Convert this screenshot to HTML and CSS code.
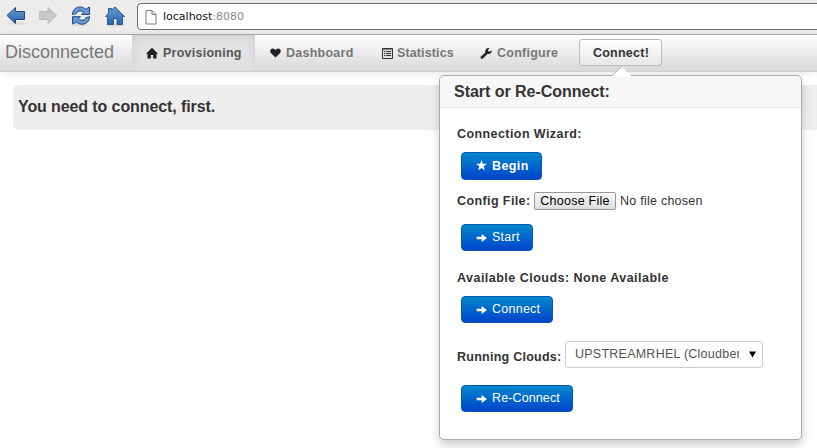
FILE: index.html
```html
<!DOCTYPE html>
<html lang="en">
<head>
<meta charset="utf-8">
<title>Provisioning</title>
<link rel="stylesheet" href="styles.css">
</head>
<body>
<svg width="0" height="0" class="defs">
  <defs>
    <linearGradient id="blue" x1="0" y1="0" x2="0" y2="1"><stop offset="0" stop-color="#6b9bd2"/><stop offset="1" stop-color="#2763ad"/></linearGradient>
    <symbol id="arrow" viewBox="0 0 11 8"><path d="M.7 2.700h5V0L11 4 5.700 8V5.300H.7z" fill="#fff"/></symbol>
  </defs>
</svg>
<header class="browser">
  <svg class="tool" width="22" height="24" viewBox="0 0 22 24"><ellipse cx="12" cy="19.500" rx="9" ry="1.500" fill="#dededc"/><path d="M2 11.500L10.500 3.500V7.500H19.500V15.500H10.500V19.500z" fill="url(#blue)" stroke="#204a87"/></svg>
  <svg class="tool" width="22" height="24" viewBox="0 0 22 24"><path d="M18.500 11.500L10 3.500V7.500H1.500V15.500H10V19.500z" fill="#c9c9c7" stroke="#bdbdbb"/></svg>
  <svg class="tool" width="22" height="24" viewBox="0 0 22 24"><ellipse cx="10" cy="21" rx="8" ry="1.500" fill="#dededc"/><g fill="#6797d0" stroke="#204a87"><path d="M1.500 10.500C1.500 3.500 9.500 .5 14.800 5.200L18.500 3V10.500H10.500L12.600 8.300C9.500 6 6 7 5.200 9.500z"/><path d="M1.500 10.500C1.500 3.500 9.500 .5 14.800 5.200L18.500 3V10.500H10.500L12.600 8.300C9.500 6 6 7 5.200 9.500z" transform="rotate(180 10 11.600)"/></g></svg>
  <svg class="tool" width="22" height="24" viewBox="0 0 22 24"><ellipse cx="10" cy="21" rx="10" ry="1.500" fill="#d5d5d3"/><path d="M.5 12.500L3.500 9V4.500H6.500V6L10 3L19.500 12.500H17.500V20.500H12V14.500H8.500V20.500H2.500V12.500z" fill="url(#blue)" stroke="#2a5a9c"/></svg>
  <div class="address">
    <svg width="12" height="16" viewBox="0 0 12 16"><path d="M1 1.500H7L11 5.500V15H1zM7 1.500V5.500H11" fill="#fff" stroke="#777"/></svg>
    <span class="url">localhost<span class="port">:8080</span></span>
  </div>
</header>
<nav class="navbar">
  <span class="brand">Disconnected</span>
  <a class="tab active"><svg width="12" height="12" viewBox="0 0 12 12"><path d="M6 .8L12 6.800H10.500V11.500H7.200V8H4.800V11.500H1.500V6.800H0z" fill="#222"/></svg><span class="t-prov">Provisioning</span></a>
  <a class="tab dash"><svg width="11" height="12" viewBox="0 0 12 12"><path d="M6 11L1.200 6.400C-.8 4 .6 1.200 3 1.200 4.500 1.200 5.500 2 6 3 6.500 2 7.500 1.200 9 1.200 11.400 1.200 12.800 4 10.800 6.400z" fill="#222"/></svg><span class="t-dash">Dashboard</span></a>
  <a class="tab stats"><svg width="11" height="12" viewBox="0 0 11 12"><path d="M.5 1.500H10.500V11.500H.5z" fill="#ddd" stroke="#333"/><path d="M0 2H11M2 4.500H3.300M2 6.500H3.300M2 8.500H3.300M4.200 4.500H9M4.200 6.500H9M4.200 8.500H9" stroke="#333"/></svg><span class="t-stat">Statistics</span></a>
  <a class="tab conf"><svg width="12" height="12" viewBox="0 0 12 12"><path d="M.8 9.800L5.400 5.500C4.700 2.800 6.700.6 9.400 1.200L8 3L8.400 4.400L9.900 4.600L11.700 3.200C12 6 9.800 7.500 7.400 6.900L2.900 11.500C1.600 12.200.2 11 .4 10z" fill="#222"/></svg><span class="t-conf">Configure</span></a>
  <button class="connect"><span>Connect!</span></button>
</nav>
<main>
  <section class="notice"><span>You need to connect, first.</span></section>
</main>
<aside class="popover">
  <svg class="tip" width="20" height="11" viewBox="0 0 20 11"><path d="M0 10L9.500 .7L19 10V11H0z" fill="#fff"/><path d="M0 9.500L9.500 .5" fill="none" stroke="#aaa"/></svg>
  <h3><span>Start or Re-Connect:</span></h3>
  <div class="content">
    <div class="label wizard"><span>Connection Wizard:</span></div>
    <button class="btn begin"><svg width="11" height="11" viewBox="0 0 11 11"><path d="M5.500 0L6.900 3.800H11L7.700 6.300L8.900 10.500L5.500 8L2.100 10.500L3.300 6.300L0 3.800H4.100z" fill="#fff"/></svg><span>Begin</span></button>
    <div class="row file"><b>Config File:</b><button class="choose"><span>Choose File</span></button><span class="none">No file chosen</span></div>
    <button class="btn start"><svg width="11" height="8"><use href="#arrow"/></svg><span>Start</span></button>
    <div class="label available"><span>Available Clouds: None Available</span></div>
    <button class="btn conn"><svg width="11" height="8"><use href="#arrow"/></svg><span>Connect</span></button>
    <div class="row running"><b>Running Clouds:</b><div class="select"><span>UPSTREAMRHEL (Cloudbers)</span><svg width="7" height="7" viewBox="0 0 7 7"><path d="M0 .5H7L3.500 6.500z"/></svg></div></div>
    <button class="btn re"><svg width="11" height="8"><use href="#arrow"/></svg><span>Re-Connect</span></button>
  </div>
</aside>
</body>
</html>
```

FILE: styles.css
```css
* { box-sizing: border-box; }
body { margin: 0; height: 448px; overflow: hidden; position: relative; background: #fff; color: #333; font: 12.5px/18px "Liberation Sans", Arial, sans-serif; letter-spacing: .25px; }
button { font: inherit; letter-spacing: inherit; margin: 0; padding: 0; }
span, b { white-space: nowrap; }
svg { flex: none; }
.defs { position: absolute; }
.browser { height: 35px; display: flex; padding: 4px 0 0 5px; background: #edecea; border-bottom: 1px solid #aaaaa8; overflow: hidden; }
.tool { margin-right: 11px; }
.tool:nth-child(3) { margin-right: 12px; }
.address { flex: none; width: 720px; height: 27px; margin: -1px 0 0 -1px; padding-left: 7px; display: flex; align-items: center; background: #fff; border: 1px solid #6c6c68; border-radius: 4px; }
.url { margin-left: 6px; font: 11px/16px "DejaVu Sans", sans-serif; letter-spacing: 0; color: #111; }
.port { color: #888; }
.navbar { height: 37px; display: flex; background: linear-gradient(#fff, #d9d7d8); border-bottom: 1px solid #d2d0d1; box-shadow: 0 1px 7px rgba(0,0,0,.1); }
.brand { width: 132px; padding-left: 5px; font-size: 18px; line-height: 34px; color: #777; letter-spacing: 0; }
.tab { display: flex; align-items: center; height: 36px; font-weight: bold; color: #777; }
.tab span { margin-left: 5px; }
.active { width: 123px; padding-left: 14px; background: #e3e2e2; color: #555; box-shadow: inset 0 3px 8px rgba(0,0,0,.08); }
.dash { width: 127px; padding-left: 15px; }
.stats { width: 98px; }
.stats .t-stat { margin-left: 4px; letter-spacing: .12px; }
.conf { width: 99px; }
.connect { width: 83px; height: 27px; margin-top: 4px; padding-left: 1px; border: 1px solid #bbb; border-radius: 3px; background: linear-gradient(#fff, #e8e7e7); font-weight: bold; color: #333; }
main { padding: 13px 0 0 13px; }
.notice { height: 45px; padding-left: 5px; border-radius: 5px 0 0 5px; background: #eee; font-size: 16px; font-weight: bold; line-height: 43px; letter-spacing: -.1px; }
.popover { position: absolute; left: 439px; top: 75px; width: 363px; height: 365px; border: 1px solid #aaa; border-radius: 5px; background: #fff; box-shadow: 0 5px 10px rgba(0,0,0,.2); }
.tip { position: absolute; left: 172px; top: -10px; }
h3 { height: 32px; margin: 0; padding-left: 14px; font-size: 16px; line-height: 31px; letter-spacing: -.03px; background: #f7f7f7; border-bottom: 1px solid #ebebeb; border-radius: 5px 5px 0 0; }
.content { padding: 17px 17px 0; }
.label { height: 18px; font-weight: bold; letter-spacing: .42px; }
.btn { display: flex; align-items: center; height: 27px; margin-left: 4px; padding-left: 15px; border: 1px solid #0757ad; border-radius: 4px; background: linear-gradient(#0088cc, #0044cc); color: #fff; }
.btn svg { position: relative; left: -1px; }
.btn span { margin-left: 4px; position: relative; top: -1px; }
.begin { width: 81px; height: 28px; margin-top: 9px; font-weight: bold; letter-spacing: .4px; }
.begin svg { top: -1px; }
.begin span { top: 0; }
.row { display: flex; align-items: center; }
.file { height: 18px; margin-top: 12px; }
.file b { width: 73px; letter-spacing: .4px; }
.choose { width: 82px; height: 18px; margin: 0 4px; border: 1px solid #999; border-radius: 2px; background: linear-gradient(#fafafa, #ddd); color: #000; line-height: 16px; }
.start { width: 72px; margin-top: 14px; }
.available { margin-top: 18px; letter-spacing: .48px; }
.conn { width: 92px; margin-top: 9px; }
.running { height: 27px; margin-top: 18px; }
.running b { width: 104px; padding-top: 4px; }
.select { width: 198px; height: 27px; margin-left: 4px; padding: 0 6px 0 9px; display: flex; align-items: center; justify-content: space-between; border: 1px solid #ccc; border-radius: 3px; color: #555; }
.select span { width: 164px; overflow: hidden; letter-spacing: .24px; position: relative; top: -1px; }
.re { width: 112px; margin-top: 17px; letter-spacing: .12px; }
```
